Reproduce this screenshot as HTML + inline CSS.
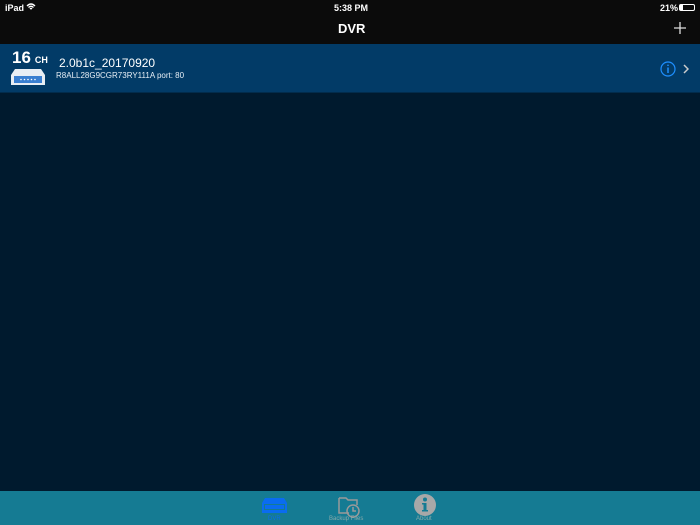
<!DOCTYPE html>
<html><head><style>
*{margin:0;padding:0;box-sizing:border-box}
body{width:700px;height:525px;overflow:hidden;background:#001a2e;font-family:"Liberation Sans",sans-serif;position:relative}
.top{position:absolute;left:0;top:0;width:700px;height:44px;background:#0b0b0b;color:#fff}
.row{position:absolute;left:0;top:44px;width:700px;height:49px;background:#023b67;border-bottom:1px solid #022c4c}
.tab{position:absolute;left:0;top:491px;width:700px;height:34px;background:#157b93}
.t{position:absolute;white-space:nowrap}
</style></head><body>
<div class="top">
<div class="t" style="left:5px;top:3px;font-size:9px;font-weight:bold">iPad</div>
<svg style="position:absolute;left:26px;top:3px" width="10" height="8" viewBox="0 0 10 8"><path d="M1 3Q5 -1 9 3M2.5 4.5Q5 2 7.5 4.5M4 6Q5 5 6 6" stroke="#fff" stroke-width="1.3" fill="none"/></svg>
<div class="t" style="left:334px;top:3px;font-size:9px;font-weight:bold">5:38 PM</div>
<div class="t" style="left:660px;top:3px;font-size:9px;font-weight:bold">21%</div>
<div style="position:absolute;left:679px;top:4px;width:16px;height:7px;border:1px solid #fff;border-radius:2px"><div style="width:3px;height:100%;background:#fff"></div></div>
<div class="t" style="left:338px;top:21px;font-size:13px;font-weight:bold">DVR</div>
<svg style="position:absolute;left:674px;top:22px" width="12" height="12"><path d="M6 0V12M0 6H12" stroke="#ddd" stroke-width="1.3"/></svg>
</div>
<div class="row">
<div class="t" style="left:12px;top:4px;font-size:17px;font-weight:bold;color:#fff">16<span style="font-size:9px;margin-left:4px">CH</span></div>
<svg style="position:absolute;left:10px;top:24px" width="36" height="18" viewBox="0 0 36 18"><path d="M5 1H31L35 7V17H1V7Z" fill="#e8eef4"/><rect x="4" y="8" width="28" height="7" fill="#3a7fd0"/><g fill="#fff"><circle cx="11" cy="11.5" r=".8"/><circle cx="14.5" cy="11.5" r=".8"/><circle cx="18" cy="11.5" r=".8"/><circle cx="21.5" cy="11.5" r=".8"/><circle cx="25" cy="11.5" r=".8"/></g></svg>
<div class="t" style="left:59px;top:12px;font-size:12px;color:#fff">2.0b1c_20170920</div>
<div class="t" style="left:56px;top:27px;font-size:8px;color:#e6eef5">R8ALL28G9CGR73RY111A port: 80</div>
<svg style="position:absolute;left:660px;top:17px" width="16" height="16"><circle cx="8" cy="8" r="7" stroke="#1e8fff" stroke-width="1.2" fill="none"/><path d="M8 6.5V12M8 3.6V5" stroke="#1e8fff" stroke-width="1.5"/></svg>
<svg style="position:absolute;left:683px;top:20px" width="6" height="10"><path d="M1 1L5 5L1 9" stroke="#ccc" stroke-width="1.5" fill="none"/></svg>
</div>
<div class="tab">
<svg style="position:absolute;left:261px;top:6px" width="27" height="17" viewBox="0 0 27 17"><path d="M4 1H23L26 6V16H1V6Z" fill="#0a6cf0"/><rect x="3" y="7" width="21" height="6" fill="#157b93"/><rect x="4" y="8" width="19" height="4" fill="#0a6cf0"/></svg>
<div class="t" style="left:268px;top:25px;font-size:6px;color:#0a6cf0">DVR</div>
<svg style="position:absolute;left:337px;top:3px" width="25" height="25" viewBox="0 0 25 25"><path d="M2 4H9L11 6H20V11M2 4V19H12" stroke="#999" stroke-width="1.5" fill="none"/><circle cx="16" cy="17" r="6" stroke="#999" stroke-width="1.5" fill="none"/><path d="M16 13V17H19" stroke="#999" stroke-width="1.5" fill="none"/></svg>
<div class="t" style="left:329px;top:25px;font-size:6px;color:#8aa">Backup Files</div>
<svg style="position:absolute;left:414px;top:3px" width="22" height="22"><circle cx="11" cy="11" r="11" fill="#a8a8a8"/><circle cx="11" cy="5.5" r="2" fill="#157b93"/><path d="M8 9H12.5V16H14V17.5H8V16H9.5V10.5H8Z" fill="#157b93"/></svg>
<div class="t" style="left:416px;top:25px;font-size:6px;color:#8aa">About</div>
</div>
</body></html>
